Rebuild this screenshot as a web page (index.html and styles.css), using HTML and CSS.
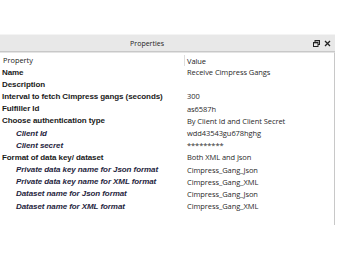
FILE: index.html
```html
<!DOCTYPE html>
<html>
<head>
<meta charset="utf-8">
<link rel="stylesheet" href="styles.css">
</head>
<body>
<div class="panel">
  <div class="titlebar">
    <span class="title">Properties</span>
    <span class="buttons">
      <svg class="ico" width="7" height="7" viewBox="0 0 7 7"><rect x="2" y="0.5" width="4.5" height="4" fill="none" stroke="#222" stroke-width="1"/><rect x="2" y="0" width="5" height="1.3" fill="#222"/><rect x="0.5" y="2.5" width="4.5" height="4" fill="#e8e8e8" stroke="#222" stroke-width="1"/><rect x="0" y="2" width="5" height="1.3" fill="#222"/></svg>
      <svg class="ico" width="7" height="7" viewBox="0 0 7 7"><path d="M1 1L6 6M6 1L1 6" stroke="#222" stroke-width="1.3"/></svg>
    </span>
  </div>
  <div class="grid">
    <div class="row head"><div class="k">Property</div><div class="v">Value</div></div>
    <div class="row"><div class="k b">Name</div><div class="v">Receive Cimpress Gangs</div></div>
    <div class="row"><div class="k b">Description</div><div class="v"></div></div>
    <div class="row"><div class="k b">Interval to fetch Cimpress gangs (seconds)</div><div class="v">300</div></div>
    <div class="row"><div class="k b">Fulfiller Id</div><div class="v">as6587h</div></div>
    <div class="row"><div class="k b">Choose authentication type</div><div class="v">By Client Id and Client Secret</div></div>
    <div class="row"><div class="k i">Client Id</div><div class="v">wdd43543gu678hghg</div></div>
    <div class="row"><div class="k i">Client secret</div><div class="v">*********</div></div>
    <div class="row"><div class="k b">Format of data key/ dataset</div><div class="v">Both XML and Json</div></div>
    <div class="row"><div class="k i">Private data key name for Json format</div><div class="v">Cimpress_Gang_Json</div></div>
    <div class="row"><div class="k i">Private data key name for XML format</div><div class="v">Cimpress_Gang_XML</div></div>
    <div class="row"><div class="k i">Dataset name for Json format</div><div class="v">Cimpress_Gang_Json</div></div>
    <div class="row"><div class="k i">Dataset name for XML format</div><div class="v">Cimpress_Gang_XML</div></div>
  </div>
</div>
</body>
</html>
```
FILE: styles.css
```css
html, body { margin: 0; padding: 0; background: #fff; }
body { width: 340px; height: 260px; overflow: hidden; }
.panel { margin-top: 34px; width: 335px; }
.titlebar {
  height: 16px;
  background: #e8e8e8;
  border-top: 1px solid #f4f4f4;
  border-bottom: 1px solid #c8c8c8;
  display: flex;
  align-items: center;
  justify-content: flex-end;
  font-family: "Open Sans", sans-serif;
  font-size: 7px;
  color: #222;
}
.title { margin-right: 149px; }
.buttons { display: flex; gap: 4px; margin-right: 4px; align-items: center; }
.ico { display: block; }
.grid {
  border-right: 1px solid #c8c8c8;
  border-top: 1px solid #e4e4e4;
  height: 170px;
  padding-top: 2px;
}
.row { display: flex; height: 12.2px; align-items: center; }
.row.head { height: 11px; }
.k {
  width: 182px; padding-left: 2px;
  font-family: "Liberation Sans", sans-serif;
  font-size: 8px;
  letter-spacing: -0.08px;
  color: #1c1c1c;
  white-space: nowrap;
}
.head .k {
  padding-left: 3px; width: 181px;
  font-family: "Open Sans", sans-serif; font-size: 7.4px; font-weight: normal;
  letter-spacing: 0;
  color: #222;
  border-right: 1px solid #ddd;
  line-height: 11px;
}
.k.b { font-weight: bold; color: #1a1a1a; }
.k.i { font-weight: bold; font-style: italic; padding-left: 16px; width: 168px; color: #1f2540; }
.v {
  padding-left: 3px;
  font-family: "Open Sans", sans-serif;
  font-size: 7.5px;
  letter-spacing: -0.07px;
  color: #2a2a2a;
  white-space: nowrap;
}
.head .v { padding-left: 2px; color: #222; }
```
